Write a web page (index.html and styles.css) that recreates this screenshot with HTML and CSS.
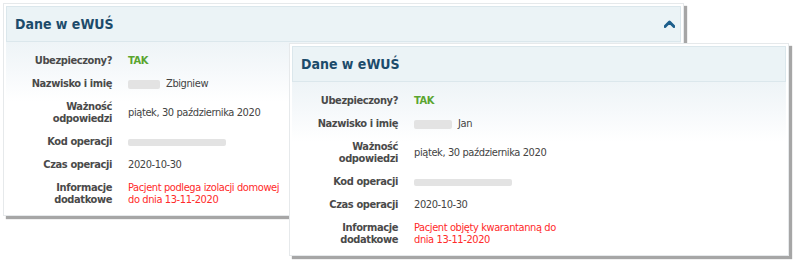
FILE: index.html
```html
<!DOCTYPE html>
<html lang="pl">
<head>
<meta charset="utf-8">
<title>Dane w eWUŚ</title>
<link rel="stylesheet" href="styles.css">
</head>
<body>
<div class="desk">
  <section class="panel panel-back">
    <header class="panel-head">
      <h2 class="panel-title">Dane w eWUŚ</h2>
      <svg class="toggle" width="11" height="8" viewBox="0 0 11 8"><path d="M1 6.5 L5.5 2 L10 6.5" fill="none" stroke="#1d5f8c" stroke-width="3" stroke-linejoin="round" stroke-linecap="round"/></svg>
    </header>
    <div class="panel-body">
      <div class="row"><div class="label">Ubezpieczony?</div><div class="value ok">TAK</div></div>
      <div class="row"><div class="label">Nazwisko i imię</div><div class="value"><span class="blur b-name"></span>Zbigniew</div></div>
      <div class="row"><div class="label">Ważność<br>odpowiedzi</div><div class="value">piątek, 30 października 2020</div></div>
      <div class="row"><div class="label">Kod operacji</div><div class="value"><span class="blur b-code"></span></div></div>
      <div class="row"><div class="label">Czas operacji</div><div class="value">2020-10-30</div></div>
      <div class="row"><div class="label">Informacje<br>dodatkowe</div><div class="value warn">Pacjent podlega izolacji domowej<br>do dnia 13-11-2020</div></div>
    </div>
  </section>

  <section class="panel panel-front">
    <header class="panel-head">
      <h2 class="panel-title">Dane w eWUŚ</h2>
    </header>
    <div class="panel-body">
      <div class="row"><div class="label">Ubezpieczony?</div><div class="value ok">TAK</div></div>
      <div class="row"><div class="label">Nazwisko i imię</div><div class="value"><span class="blur b-name2"></span>Jan</div></div>
      <div class="row"><div class="label">Ważność<br>odpowiedzi</div><div class="value">piątek, 30 października 2020</div></div>
      <div class="row"><div class="label">Kod operacji</div><div class="value"><span class="blur b-code"></span></div></div>
      <div class="row"><div class="label">Czas operacji</div><div class="value">2020-10-30</div></div>
      <div class="row"><div class="label">Informacje<br>dodatkowe</div><div class="value warn">Pacjent objęty kwarantanną do<br>dnia 13-11-2020</div></div>
    </div>
  </section>
</div>
</body>
</html>
```

FILE: styles.css
```css
html, body {
  margin: 0;
  padding: 0;
  background: #ffffff;
}
body {
  font-family: "DejaVu Sans Condensed", "DejaVu Sans", sans-serif;
  font-size: 11px;
  color: #444;
}
.desk {
  position: relative;
  width: 800px;
  height: 261px;
  overflow: hidden;
}
.panel {
  position: absolute;
  box-sizing: border-box;
  background: #fff;
  border: 1px solid #e6e9eb;
  padding: 2px 2px 3px;
  box-shadow: 3px 3px 1px rgba(0, 0, 0, 0.35);
  display: flex;
  flex-direction: column;
}
.panel-back {
  left: 3px;
  top: 3px;
  width: 681px;
}
.panel-front {
  left: 289px;
  top: 43px;
  width: 500px;
}
.panel-head {
  display: flex;
  align-items: center;
  justify-content: space-between;
  height: 34px;
  padding: 0 5px 0 8px;
  background: #ebf3f6;
  border: 1px solid #dbe7ec;
}
.panel-title {
  margin: 0;
  font-size: 14px;
  font-weight: bold;
  color: #1c4b6b;
}
.toggle {
  display: block;
}
.panel-body {
  flex: 1;
  padding-top: 8px;
  background: linear-gradient(#eef4f7 0px, #f6f9fb 30px, #ffffff 60px);
}
.row {
  display: flex;
  padding: 5px 0 6px;
  line-height: 12px;
  letter-spacing: -0.4px;
}
.label {
  width: 106px;
  flex: none;
  text-align: right;
  font-weight: bold;
  color: #4a4a4a;
}
.value {
  padding-left: 16px;
  color: #444;
  display: flex;
  align-items: center;
}
.value.warn { display: block; color: #ff2a2a; }
.ok {
  font-weight: bold;
  color: #5aa52f;
}
.blur {
  display: inline-block;
  height: 9px;
  background: #e3e3e3;
  border-radius: 2px;
  filter: blur(0.6px);
}
.b-name { width: 32px; margin-right: 6px; }
.b-name2 { width: 38px; margin-right: 6px; }
.b-code { width: 98px; height: 7px; }
```
